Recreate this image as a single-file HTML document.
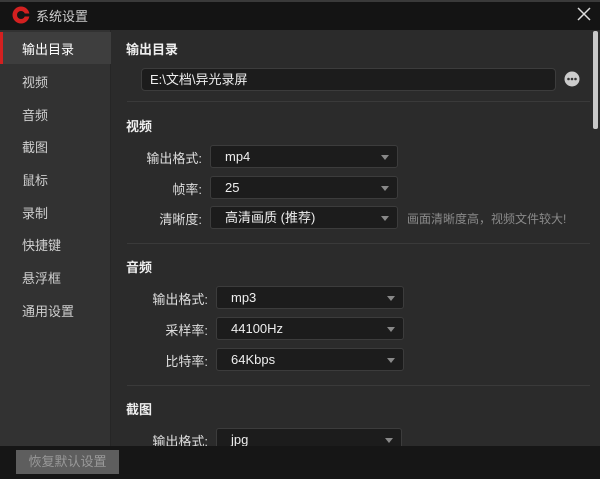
<!DOCTYPE html><html><head><meta charset="utf-8"><style>
*{margin:0;padding:0;box-sizing:border-box}
body{width:600px;height:479px;overflow:hidden;background:#2b2b2b;font-family:"Liberation Sans","Noto Sans CJK SC",sans-serif;font-size:13px;color:#ddd;position:relative}
.a{position:absolute}
.title{left:0;top:0;width:600px;height:30px;background:#141414;border-top:2px solid #3a3a3a}
.side{left:0;top:30px;width:111px;height:416px;background:#323232;border-right:1px solid #262626}
.si{position:absolute;left:22px;color:#cfcfcf;font-size:13px}
.sel,.inp{position:absolute;height:23px;background:#1c1c1c;border:1px solid #3c3c3c;border-radius:3px;color:#eee;padding-left:14px;line-height:21px;font-size:13px}
.sel:after{content:"";position:absolute;right:8px;top:9px;border:4px solid transparent;border-top:5px solid #888}
.lbl{position:absolute;text-align:right;font-size:13px;color:#ddd}
.h{position:absolute;left:126px;font-size:13px;font-weight:bold;color:#eee}
.div{position:absolute;left:127px;width:463px;height:1px;background:#3a3a3a}
</style></head><body>
<div class="a title"></div>
<svg class="a" style="left:11px;top:5px" width="20" height="20" viewBox="0 0 20 20"><circle cx="10" cy="10" r="8.5" fill="#d32020"/><circle cx="10" cy="10" r="4" fill="#141414"/><rect x="9" y="8.5" width="10" height="3" fill="#141414"/></svg>
<div class="a" style="left:36px;top:6px;color:#ccc;font-size:13px">系统设置</div>
<svg class="a" style="left:577px;top:7px" width="14" height="14" viewBox="0 0 14 14"><path d="M1 1L13 13M13 1L1 13" stroke="#ddd" stroke-width="1.5"/></svg>
<div class="a side"></div>
<div class="a" style="left:0;top:32px;width:111px;height:32px;background:#3e3e3e"></div>
<div class="a" style="left:0;top:32px;width:3px;height:32px;background:#d32020"></div>
<div class="si" style="top:39px;color:#fff">输出目录</div>
<div class="si" style="top:72px">视频</div>
<div class="si" style="top:105px">音频</div>
<div class="si" style="top:137px">截图</div>
<div class="si" style="top:170px">鼠标</div>
<div class="si" style="top:203px">录制</div>
<div class="si" style="top:235px">快捷键</div>
<div class="si" style="top:268px">悬浮框</div>
<div class="si" style="top:301px">通用设置</div>
<div class="a" style="left:593px;top:31px;width:5px;height:98px;background:#c8c8c8;border-radius:2px"></div>
<div class="h" style="top:39px">输出目录</div>
<div class="inp" style="left:141px;top:68px;width:415px;padding-left:8px;border-radius:4px">E:\文档\异光录屏</div>
<svg class="a" style="left:564px;top:71px" width="16" height="16" viewBox="0 0 16 16"><circle cx="8" cy="8" r="7.5" fill="#ccc"/><circle cx="4.5" cy="8" r="1.3" fill="#333"/><circle cx="8" cy="8" r="1.3" fill="#333"/><circle cx="11.5" cy="8" r="1.3" fill="#333"/></svg>
<div class="div" style="top:101px"></div>
<div class="h" style="top:116px">视频</div>
<div class="lbl" style="left:130px;width:72px;top:148px">输出格式:</div>
<div class="sel" style="left:210px;top:145px;width:188px">mp4</div>
<div class="lbl" style="left:130px;width:72px;top:179px">帧率:</div>
<div class="sel" style="left:210px;top:176px;width:188px">25</div>
<div class="lbl" style="left:130px;width:72px;top:209px">清晰度:</div>
<div class="sel" style="left:210px;top:206px;width:188px">高清画质 (推荐)</div>
<div class="a" style="left:407px;top:210px;color:#8a8a8a;font-size:12px">画面清晰度高，视频文件较大!</div>
<div class="div" style="top:243px"></div>
<div class="h" style="top:257px">音频</div>
<div class="lbl" style="left:130px;width:78px;top:289px">输出格式:</div>
<div class="sel" style="left:216px;top:286px;width:188px">mp3</div>
<div class="lbl" style="left:130px;width:78px;top:320px">采样率:</div>
<div class="sel" style="left:216px;top:317px;width:188px">44100Hz</div>
<div class="lbl" style="left:130px;width:78px;top:351px">比特率:</div>
<div class="sel" style="left:216px;top:348px;width:188px">64Kbps</div>
<div class="div" style="top:385px"></div>
<div class="h" style="top:399px">截图</div>
<div class="lbl" style="left:130px;width:78px;top:431px">输出格式:</div>
<div class="sel" style="left:216px;top:428px;width:186px">jpg</div>
<div class="a" style="left:0;top:446px;width:600px;height:33px;background:#161616"></div>
<div class="a" style="left:16px;top:450px;width:103px;height:24px;background:#5e5e5e;color:#999;text-align:center;line-height:24px;font-size:13px">恢复默认设置</div>
</body></html>
